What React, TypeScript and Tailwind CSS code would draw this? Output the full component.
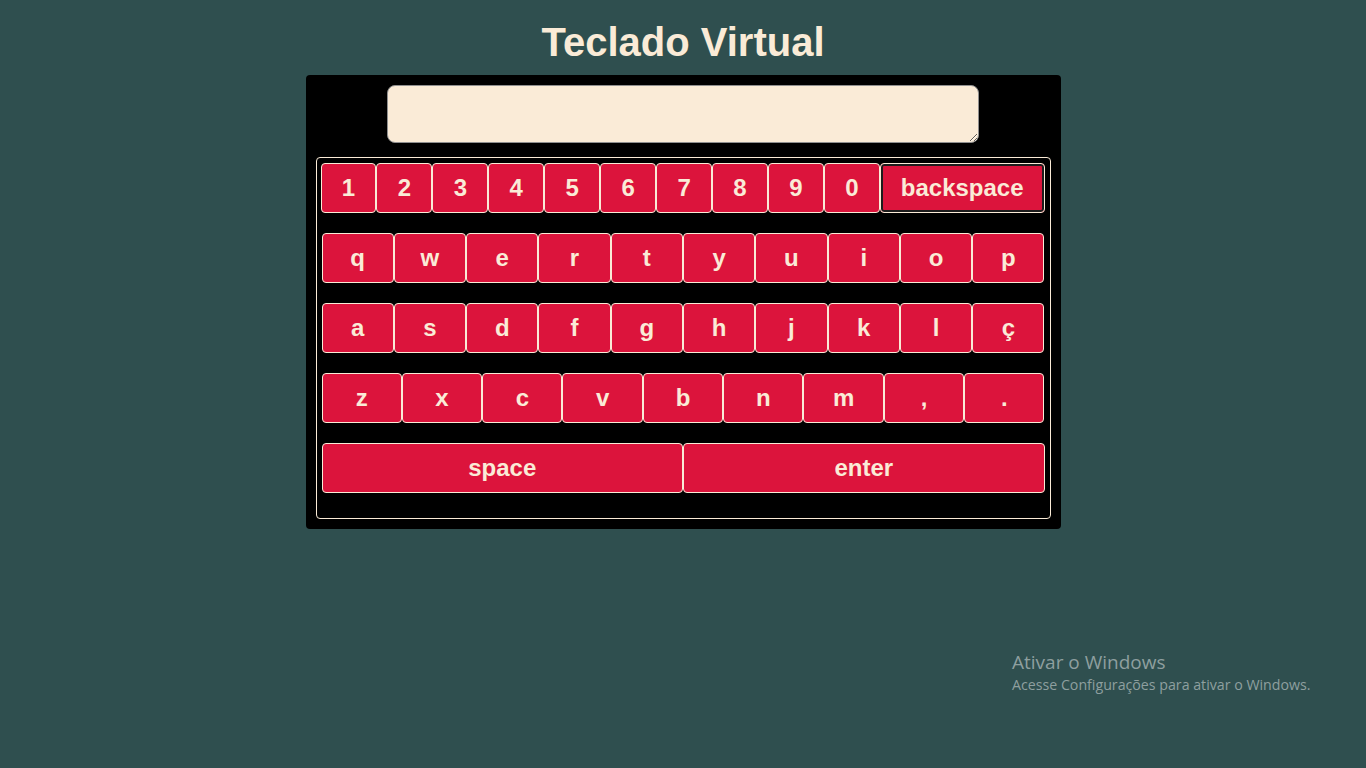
import React, { useState } from 'react';

const rows: string[][] = [
    ['q', 'w', 'e', 'r', 't', 'y', 'u', 'i', 'o', 'p'],
    ['a', 's', 'd', 'f', 'g', 'h', 'j', 'k', 'l', 'ç'],
    ['z', 'x', 'c', 'v', 'b', 'n', 'm', ',', '.'],
];

const digits = ['1', '2', '3', '4', '5', '6', '7', '8', '9', '0'];

const keyClass =
    'h-[50px] flex items-center justify-center bg-[#dc143c] text-[#faebd7] border border-[#faebd7] rounded-[4px] text-[24px] font-bold leading-none';

const App: React.FC = () => {
    const [text, setText] = useState('');

    const press = (k: string) => setText(t => t + k);

    return (
        <div className="min-h-screen bg-[#2f4f4f] flex flex-col items-center pt-[19px] font-['Liberation_Sans',Arial,sans-serif] relative">
            <h1 className="text-[40px] font-bold leading-[46px] text-[#faebd7] mb-[10px]">Teclado Virtual</h1>

            <div className="w-[755px] bg-black rounded-[4px] p-[10px] flex flex-col items-center">
                <textarea
                    value={text}
                    onChange={e => setText(e.target.value)}
                    className="w-[592px] h-[58px] bg-[#faebd7] border border-[#8f8f8f] rounded-[8px] mb-[14px] px-2 py-1 text-black outline-none"
                />

                <div className="w-[735px] border border-[#faebd7] rounded-[4px] pl-[4px] pr-[5px] pt-[5px] pb-[25px] flex flex-col gap-[20px]">
                    <div className="flex">
                        {digits.map(d => (
                            <button key={d} onClick={() => press(d)} className={`${keyClass} w-[55.95px] shrink-0`}>{d}</button>
                        ))}
                        <button
                            onClick={() => setText(t => t.slice(0, -1))}
                            className={`${keyClass} flex-1 shadow-[inset_0_0_0_2px_#1c1c1c]`}
                        >
                            backspace
                        </button>
                    </div>

                    {rows.map((row, i) => (
                        <div key={i} className="flex ml-[1px]">
                            {row.map(k => (
                                <button key={k} onClick={() => press(k)} className={`${keyClass} flex-1`}>{k}</button>
                            ))}
                        </div>
                    ))}

                    <div className="flex ml-[1px]">
                        <button onClick={() => press(' ')} className={`${keyClass} flex-1`}>space</button>
                        <button onClick={() => press('\n')} className={`${keyClass} flex-1`}>enter</button>
                    </div>
                </div>
            </div>

            <div className="absolute left-[1012px] top-[650px] text-[#8e9f9f] font-['Open_Sans','Noto_Sans',sans-serif]">
                <div className="text-[19px] leading-[24px]">Ativar o Windows</div>
                <div className="text-[14.2px] leading-[21px]">Acesse Configurações para ativar o Windows.</div>
            </div>
        </div>
    );
};

export default App;
